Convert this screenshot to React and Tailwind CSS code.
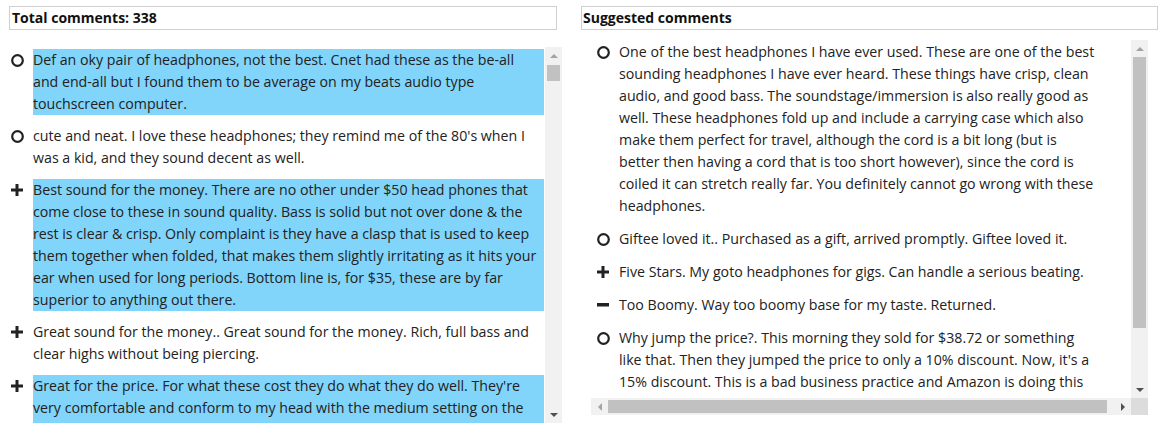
import React from 'react';

// comment lists, one array entry per rendered line so the wrap matches
const totalComments = [
  {
    kind: 'neutral',
    hot: true,
    lines: [
      'Def an oky pair of headphones, not the best. Cnet had these as the be-all',
      'and end-all but I found them to be average on my beats audio type',
      'touchscreen computer.',
    ],
  },
  {
    kind: 'neutral',
    lines: [
      "cute and neat. I love these headphones; they remind me of the 80's when I",
      'was a kid, and they sound decent as well.',
    ],
  },
  {
    kind: 'plus',
    hot: true,
    lines: [
      'Best sound for the money. There are no other under $50 head phones that',
      'come close to these in sound quality. Bass is solid but not over done & the',
      'rest is clear & crisp. Only complaint is they have a clasp that is used to keep',
      'them together when folded, that makes them slightly irritating as it hits your',
      'ear when used for long periods. Bottom line is, for $35, these are by far',
      'superior to anything out there.',
    ],
  },
  {
    kind: 'plus',
    lines: [
      'Great sound for the money.. Great sound for the money. Rich, full bass and',
      'clear highs without being piercing.',
    ],
  },
  {
    kind: 'plus',
    hot: true,
    more: true,
    lines: [
      "Great for the price. For what these cost they do what they do well. They're",
      'very comfortable and conform to my head with the medium setting on the',
    ],
  },
];

const suggested = [
  {
    kind: 'neutral',
    lines: [
      'One of the best headphones I have ever used. These are one of the best',
      'sounding headphones I have ever heard. These things have crisp, clean',
      'audio, and good bass. The soundstage/immersion is also really good as',
      'well. These headphones fold up and include a carrying case which also',
      'make them perfect for travel, although the cord is a bit long (but is',
      'better then having a cord that is too short however), since the cord is',
      'coiled it can stretch really far. You definitely cannot go wrong with these',
      'headphones.',
    ],
  },
  {
    kind: 'neutral',
    lines: ['Giftee loved it.. Purchased as a gift, arrived promptly. Giftee loved it.'],
  },
  {
    kind: 'plus',
    lines: ['Five Stars. My goto headphones for gigs. Can handle a serious beating.'],
  },
  {
    kind: 'minus',
    lines: ['Too Boomy. Way too boomy base for my taste. Returned.'],
  },
  {
    kind: 'neutral',
    lines: [
      'Why jump the price?. This morning they sold for $38.72 or something',
      "like that. Then they jumped the price to only a 10% discount. Now, it's a",
      '15% discount. This is a bad business practice and Amazon is doing this',
    ],
  },
];

function Mark({ kind }) {
  if (kind === 'plus') {
    return (
      <svg width="12" height="12" viewBox="0 0 12 12" className="mt-[5px]">
        <rect x="4.5" y="0" width="3" height="12" fill="#222" />
        <rect x="0" y="4.5" width="12" height="3" fill="#222" />
      </svg>
    );
  }
  if (kind === 'minus') {
    return (
      <svg width="12" height="12" viewBox="0 0 12 12" className="mt-[5px]">
        <rect x="0" y="4" width="12" height="3.5" fill="#222" />
      </svg>
    );
  }
  return (
    <svg width="13" height="13" viewBox="0 0 13 13" className="mt-[5px]">
      <circle cx="6.5" cy="6.5" r="5.3" fill="none" stroke="#222" strokeWidth="2.2" />
    </svg>
  );
}

function Arrow({ dir, light }) {
  const fill = light ? '#a3a3a3' : '#505050';
  const pts = {
    up: '0,4 4,0 8,4',
    down: '0,0 8,0 4,4',
    left: '4,0 4,8 0,4',
    right: '0,0 0,8 4,4',
  }[dir];
  const vertical = dir === 'up' || dir === 'down';
  return (
    <svg width={vertical ? 8 : 4} height={vertical ? 4 : 8} viewBox={vertical ? '0 0 8 4' : '0 0 4 8'}>
      <polygon points={pts} fill={fill} />
    </svg>
  );
}

function VScroll({ thumbTop, thumbHeight }) {
  return (
    <div className="flex w-[17px] shrink-0 flex-col bg-[#f1f1f1]">
      <div className="flex h-[17px] items-center justify-center">
        <Arrow dir="up" light />
      </div>
      <div className="flex-1 px-[2px]">
        <div className="bg-[#c1c1c1]" style={{ marginTop: thumbTop, height: thumbHeight }} />
      </div>
      <div className="flex h-[17px] items-center justify-center">
        <Arrow dir="down" />
      </div>
    </div>
  );
}

function Item({ item, gap, textWidth }) {
  return (
    <div className="flex" style={{ marginBottom: gap }}>
      <div className="flex w-[24px] shrink-0 justify-start pl-[2px]">
        <Mark kind={item.kind} />
      </div>
      <div
        className={item.hot ? 'bg-[#81d4fa] whitespace-nowrap' : 'whitespace-nowrap'}
        style={{ width: textWidth, paddingBottom: item.more ? 22 : 0 }}
      >
        {item.lines.map((l, i) => (
          <div key={i} className="h-[22px] leading-[22px]">
            {l}
          </div>
        ))}
      </div>
    </div>
  );
}

export default function App() {
  return (
    <div
      className="flex h-[441px] w-[1167px] overflow-hidden bg-white text-[14px] text-[#222]"
      style={{ fontFamily: '"Open Sans", "Noto Sans", Arial, sans-serif' }}
    >
      {/* left column */}
      <div className="ml-[9px] flex w-[553px] shrink-0 flex-col pt-[6px]">
        <div className="h-[24px] w-[548px] border border-[#d0d0d0] pl-[2px] text-[14px] font-bold leading-[22px] text-[#111]">
          Total comments: 338
        </div>
        <div className="mt-[17px] flex h-[376px]">
          <div className="w-[536px] overflow-hidden pt-[2px] text-[14.2px]">
            {totalComments.map((c, i) => (
              <Item key={i} item={c} gap={10} textWidth={511} />
            ))}
          </div>
          <VScroll thumbTop={1} thumbHeight={16} />
        </div>
      </div>

      {/* right column */}
      <div className="ml-[19px] flex w-[577px] shrink-0 flex-col pt-[6px]">
        <div className="h-[24px] w-[577px] border border-[#d0d0d0] pl-[1px] text-[14px] font-bold leading-[22px] text-[#111]">
          Suggested comments
        </div>
        <div className="ml-[10px] mt-[10px] flex h-[375px] w-[557px] flex-col">
          <div className="flex h-[358px]">
            <div className="flex-1 overflow-hidden pl-[4px] pt-[1px] text-[14.2px]">
              {suggested.map((c, i) => (
                <Item key={i} item={c} gap={11} textWidth={510} />
              ))}
            </div>
            <VScroll thumbTop={0} thumbHeight={271} />
          </div>
          <div className="flex h-[17px]">
            <div className="flex flex-1 bg-[#f1f1f1]">
              <div className="flex w-[17px] items-center justify-center">
                <Arrow dir="left" light />
              </div>
              <div className="flex-1 py-[2px]">
                <div className="h-full w-[499px] bg-[#c1c1c1]" />
              </div>
              <div className="flex w-[17px] items-center justify-center">
                <Arrow dir="right" />
              </div>
            </div>
            <div className="w-[17px] bg-[#dcdcdc]" />
          </div>
        </div>
      </div>
    </div>
  );
}
